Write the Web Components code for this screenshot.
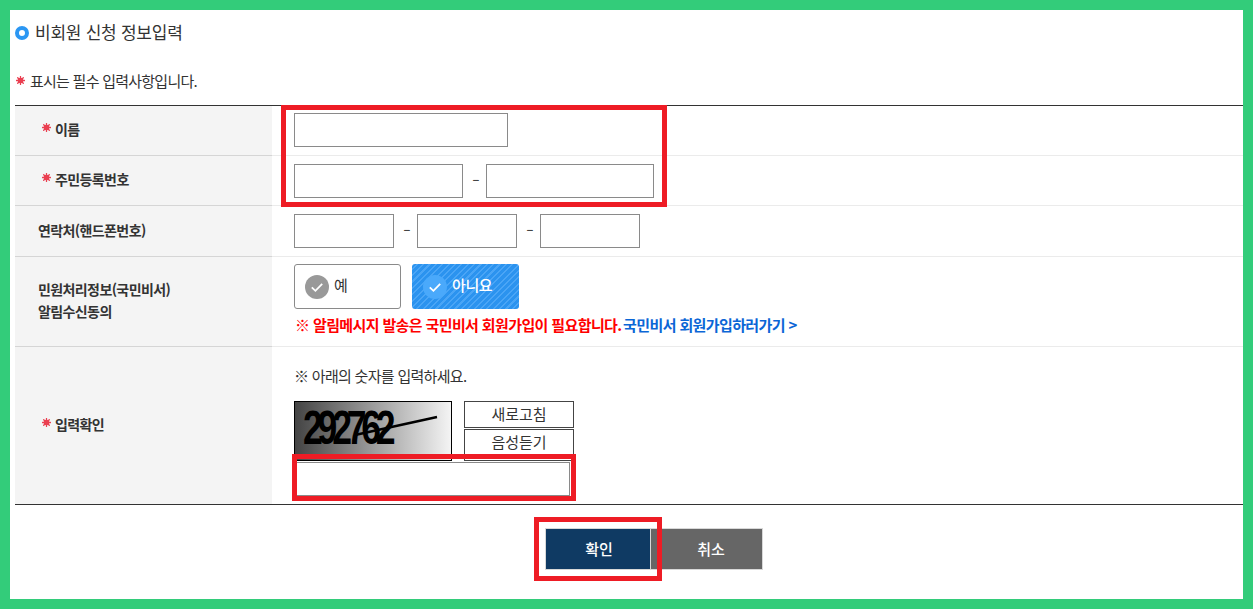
<!DOCTYPE html>
<html lang="ko">
<head>
<meta charset="utf-8">
<title>비회원 신청 정보입력</title>
<style>
    html, body { margin: 0; padding: 0; }
    body {
        font-family: "Noto Sans CJK KR", "Noto Sans", sans-serif;
        color: #333;
        background: #33cc7a;
    }
</style>
</head>
<body>
<apply-page>
    <section-title>비회원 신청 정보입력</section-title>
    <required-note>표시는 필수 입력사항입니다.</required-note>
    <form-table>
        <form-row label="이름" required height="50" pad="7">
            <text-box width="214"></text-box>
        </form-row>
        <form-row label="주민등록번호" required height="50" pad="8">
            <text-box width="169"></text-box>
            <dash-mark></dash-mark>
            <text-box width="168"></text-box>
        </form-row>
        <form-row label="연락처(핸드폰번호)" height="51" pad="8">
            <text-box width="100"></text-box>
            <dash-mark></dash-mark>
            <text-box width="100"></text-box>
            <dash-mark></dash-mark>
            <text-box width="100"></text-box>
        </form-row>
        <form-row label="민원처리정보(국민비서)&#10;알림수신동의" height="90" stack>
            <choice-group></choice-group>
            <notice-line></notice-line>
        </form-row>
        <form-row label="입력확인" required height="157" last stack>
            <captcha-box></captcha-box>
        </form-row>
    </form-table>
    <action-bar></action-bar>
    <mark-box style="left:271px;top:95px;width:376px;height:92px"></mark-box>
    <mark-box style="left:282px;top:444px;width:274px;height:37px"></mark-box>
    <mark-box style="left:524px;top:507px;width:118px;height:54px"></mark-box>
</apply-page>

<script>
const STAR = `<svg class="star" width="9" height="9" viewBox="0 0 18 18" aria-hidden="true"><g stroke="#ea3f50" stroke-width="2.6" stroke-linecap="round"><path d="M9 1v16M1 9h16M3.4 3.4l11.2 11.2M14.6 3.4 3.4 14.6"/></g><circle cx="9" cy="9" r="5.5" fill="#ea3f50"/></svg>`;
const CHECK = `<svg width="24" height="24" viewBox="0 0 24 24" aria-hidden="true"><circle cx="12" cy="12" r="12" fill="var(--dot)"/><path d="M6.8 12.4l3.6 3.4 6.8-7" fill="none" stroke="#fff" stroke-width="1.8"/></svg>`;

function define(name, html) {
    customElements.define(name, class extends HTMLElement {
        constructor() {
            super();
            this.attachShadow({ mode: 'open' });
            this.shadowRoot.innerHTML = html;
        }
    });
}

define('apply-page', `
    <style>
        :host { display: block; position: relative; box-sizing: border-box; height: 589px; margin: 10px; padding: 0 0 0 5px; background: #fff; overflow: hidden; }
    </style>
    <slot></slot>
`);

define('section-title', `
    <style>
        :host { display: flex; align-items: center; gap: 6px; height: 44px; font-size: 17px; letter-spacing: -0.25px; color: #333; }
        i { width: 6px; height: 6px; border: 4px solid #2b97f3; border-radius: 50%; background: #fff; margin-top: 1px; }
        span { margin-top: -2px; }
    </style>
    <i></i><span><slot></slot></span>
`);

define('required-note', `
    <style>
        :host { display: flex; align-items: center; gap: 5px; box-sizing: border-box; height: 51px; padding: 1px 0 0 1px; font-size: 15px; letter-spacing: -0.75px; color: #333; }
    </style>
    ${STAR}<span><slot></slot></span>
`);

define('form-table', `
    <style>
        :host { display: block; border-top: 1px solid #333; border-bottom: 1px solid #333; }
    </style>
    <slot></slot>
`);

class FormRow extends HTMLElement {
    constructor() {
        super();
        this.attachShadow({ mode: 'open' });
    }

    connectedCallback() {
        const label = this.getAttribute('label') || '';
        const star = this.hasAttribute('required') ? STAR : '';
        const last = this.hasAttribute('last');
        const pad = this.getAttribute('pad') || 0;
        this.shadowRoot.innerHTML = `
            <style>
                :host { display: grid; grid-template-columns: 257px 1fr; height: ${this.getAttribute('height')}px; }
                .head { display: flex; align-items: center; gap: 4px; padding-left: ${star ? 27 : 23}px; background: #f4f4f4; font-size: 14px; font-weight: 700; letter-spacing: -0.6px; line-height: 22px; white-space: pre-line; color: #333; border-bottom: ${last ? 0 : 1}px solid #d5d5d5; }
                .head span { margin-top: -3px; }
                .star { margin-top: -6px; }
                .body { display: flex; align-items: flex-start; padding: ${pad}px 0 0 22px; border-bottom: ${last ? 0 : 1}px solid #ebebeb; }
                :host([stack]) .body { display: block; }
            </style>
            <div class="head">${star}<span>${label}</span></div>
            <div class="body"><slot></slot></div>
        `;
    }
}
customElements.define('form-row', FormRow);

class TextBox extends HTMLElement {
    constructor() {
        super();
        this.attachShadow({ mode: 'open' });
    }

    connectedCallback() {
        this.shadowRoot.innerHTML = `
            <style>
                :host { display: block; }
                input { display: block; box-sizing: border-box; width: ${this.getAttribute('width')}px; height: 34px; border: 1px solid #8a8a8a; background: #fff; padding: 0; margin: 0; }
            </style>
            <input type="text">
        `;
    }
}
customElements.define('text-box', TextBox);

define('dash-mark', `
    <style>
        :host { display: block; width: 23px; text-align: center; font-size: 15px; line-height: 32px; color: #444; }
        span { display: block; padding-left: 2px; transform: scaleX(1.5); }
    </style>
    <span>-</span>
`);

define('choice-group', `
    <style>
        :host { display: flex; gap: 11px; padding-top: 7px; }
        div { display: flex; align-items: center; box-sizing: border-box; width: 107px; height: 45px; padding: 0 0 0 10px; gap: 5px; border-radius: 3px; font-size: 15px; letter-spacing: -0.4px; }
        span { margin-top: -5px; }
        .off { --dot: #999; border: 1px solid #8a8a8a; background: #fff; color: #333; }
        .on { --dot: #4aa9fb; padding-left: 11px; color: #fff; font-weight: 500; background: repeating-linear-gradient(135deg, #2b93ef 0 3px, #4aa5f6 3px 4.5px); }
    </style>
    <div class="off">${CHECK}<span>예</span></div>
    <div class="on">${CHECK}<span>아니요</span></div>
`);

define('notice-line', `
    <style>
        :host { display: block; margin-top: 5px; padding-left: 1px; font-size: 15px; font-weight: 700; letter-spacing: -0.62px; line-height: 22px; white-space: nowrap; }
        b { color: #f00; font-weight: 700; }
        a { color: #0b66d6; text-decoration: none; margin-left: -2px; }
    </style>
    <b>※ 알림메시지 발송은 국민비서 회원가입이 필요합니다.</b> <a>국민비서 회원가입하러가기 &gt;</a>
`);

define('captcha-box', `
    <style>
        :host { display: block; padding: 19px 0 0 0; font-size: 15px; letter-spacing: -0.7px; color: #333; }
        p { margin: 0 0 15px; line-height: 20px; }
        .pair { display: flex; gap: 12px; height: 60px; }
        .pic { position: relative; box-sizing: border-box; width: 158px; height: 60px; border: 1px solid #000; background: linear-gradient(90deg, #444, #f4f4f4); overflow: hidden; }
        .pic span { position: absolute; left: 8px; top: 1px; font: 700 48px/50px "Liberation Sans", sans-serif; letter-spacing: -7px; color: #000; transform: scaleX(.74); transform-origin: left; }
        .pic svg { position: absolute; left: 0; top: 0; }
        .btns { display: flex; flex-direction: column; gap: 1px; width: 110px; }
        .btns div { box-sizing: border-box; height: 27px; border: 1px solid #444; text-align: center; font-size: 15px; letter-spacing: 0; line-height: 24px; color: #333; background: #fff; }
        .btns div + div { height: 32px; }
        .answer { display: block; box-sizing: border-box; width: 274px; height: 34px; margin: 1px 0 0 2px; border: 1px solid #8a8a8a; background: #fff; padding: 0; }
    </style>
    <p>※ 아래의 숫자를 입력하세요.</p>
    <div class="pair">
        <div class="pic"><span>292762</span><svg width="156" height="58"><path d="M60 33 142 15" stroke="#000" stroke-width="2.4"/></svg></div>
        <div class="btns"><div>새로고침</div><div>음성듣기</div></div>
    </div>
    <input class="answer" type="text">
`);

define('action-bar', `
    <style>
        :host { display: flex; padding: 23px 0 0 530px; }
        div { box-sizing: border-box; display: flex; align-items: center; justify-content: center; height: 42px; border: 1px solid #d8d8d8; color: #fff; font-size: 15px; font-weight: 500; }
        span { margin-top: -2px; }
        .ok { width: 106px; padding-left: 2px; background: #0f3a63; }
        .no { width: 112px; padding-left: 9px; background: #666; border-left: 0; }
    </style>
    <div class="ok"><span>확인</span></div><div class="no"><span>취소</span></div>
`);

define('mark-box', `
    <style>
        :host { display: block; position: absolute; border: 5px solid #ee1c25; pointer-events: none; }
    </style>
`);
</script>
</body>
</html>
